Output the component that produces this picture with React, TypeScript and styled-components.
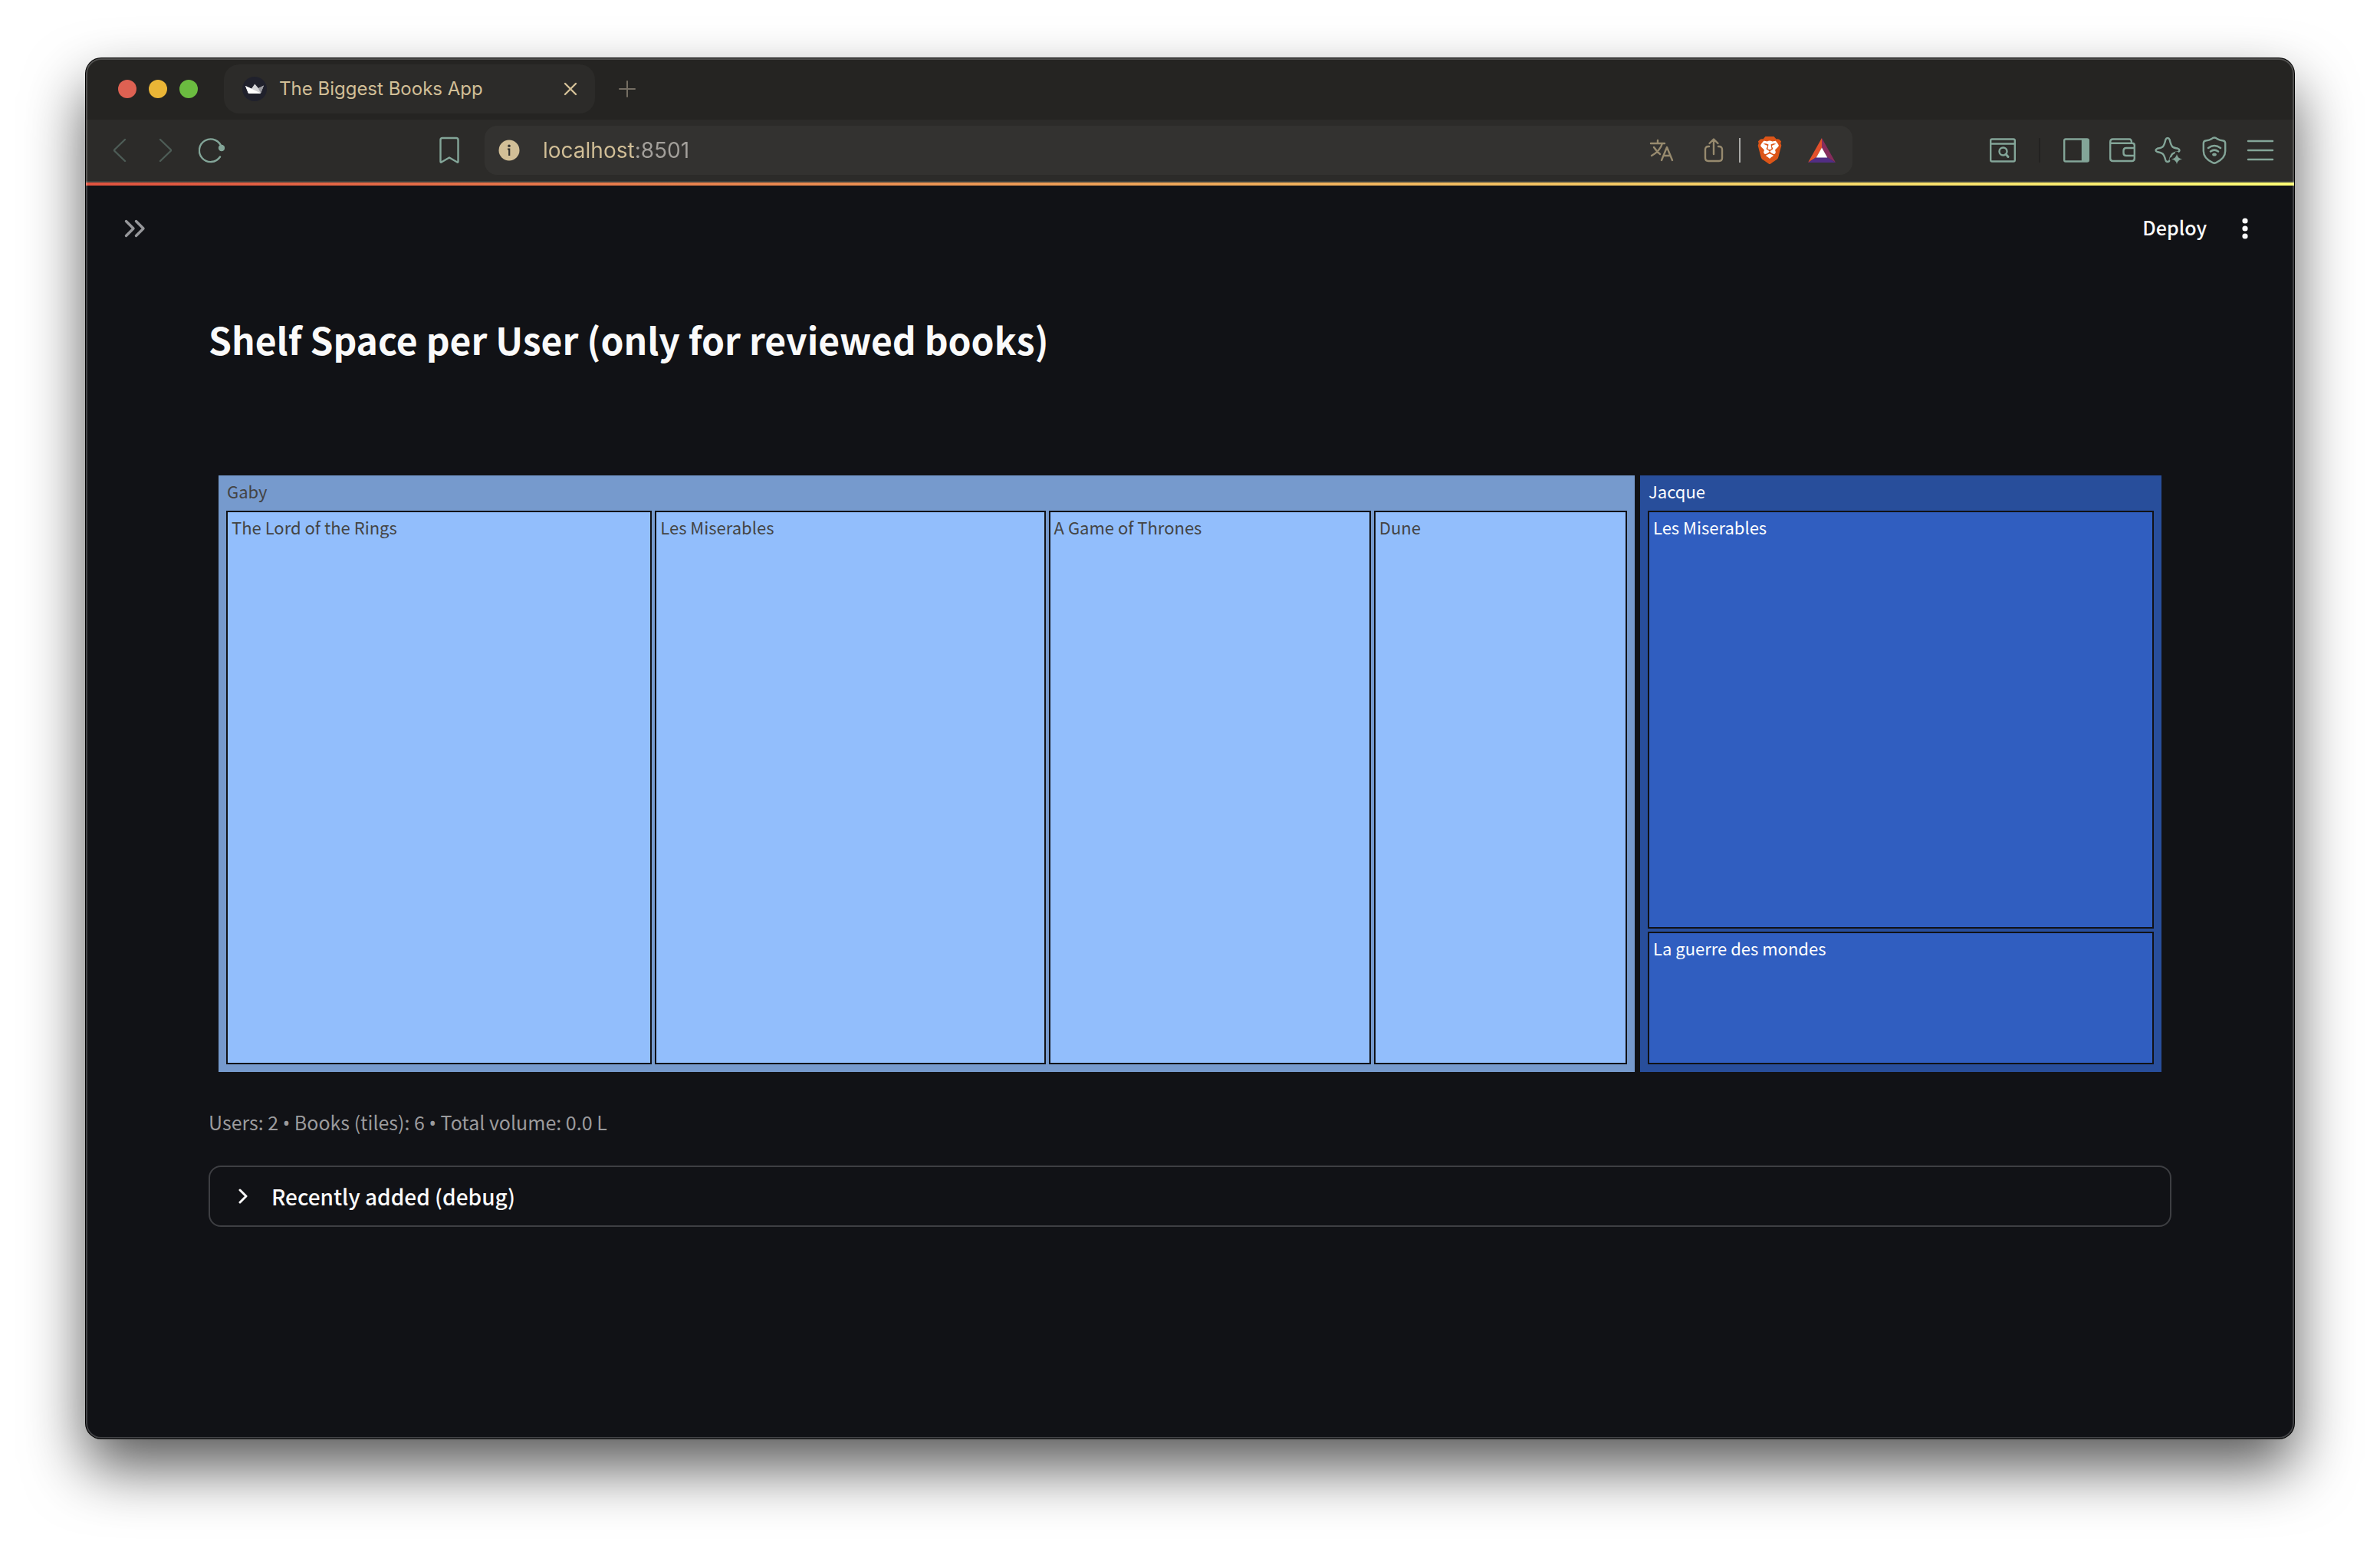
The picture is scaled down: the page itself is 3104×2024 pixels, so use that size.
import React from "react";
import styled, { createGlobalStyle } from "styled-components";
import { SiBrave } from "react-icons/si";

const uiFont = `Inter, Roboto, "Liberation Sans", sans-serif`;
const pageFont = `"Noto Sans CJK SC", "Noto Sans", sans-serif`;

const GlobalStyle = createGlobalStyle`
  *, *::before, *::after { box-sizing: border-box; }
  body { margin: 0; background: #ffffff; }
  button, input { font: inherit; }
`;

const Desktop = styled.div`
  display: flex;
  min-height: 100vh;
  padding: 76px 112px 148px;
  overflow: hidden;
`;

const Window = styled.div`
  position: relative;
  flex: 1;
  min-width: 0;
  display: flex;
  flex-direction: column;
  border-radius: 20px;
  overflow: hidden;
  background: #111216;
  box-shadow: 0 0 0 1px #000000, 0 38px 78px rgba(0, 0, 0, 0.65);

  &::after {
    content: "";
    position: absolute;
    inset: 0;
    border: 2px solid rgba(255, 255, 255, 0.2);
    border-radius: inherit;
    pointer-events: none;
  }
`;

const TabStrip = styled.div`
  display: flex;
  align-items: center;
  height: 80px;
  padding: 0 42px;
  background: #252422;
  font-family: ${uiFont};
`;

const Lights = styled.div`
  display: flex;
  gap: 16px;
  margin-right: 34px;
`;

const Light = styled.button<{ $color: string }>`
  width: 24px;
  height: 24px;
  padding: 0;
  border: 0;
  border-radius: 50%;
  background: ${(p) => p.$color};
`;

const Tab = styled.div`
  display: flex;
  align-items: center;
  width: 484px;
  height: 64px;
  padding: 0 20px 0 24px;
  border-radius: 20px;
  background: #2c2b29;
`;

const TabTitle = styled.span`
  flex: 1;
  margin-left: 16px;
  color: #d2bf97;
  font-size: 24px;
  line-height: 32px;
  white-space: nowrap;
`;

const IconButton = styled.button<{ $width?: number; $color?: string }>`
  display: flex;
  align-items: center;
  justify-content: center;
  flex: none;
  width: ${(p) => p.$width ?? 60}px;
  height: 40px;
  padding: 0;
  border: 0;
  background: none;
  color: ${(p) => p.$color ?? "#83a598"};

  svg {
    display: block;
    flex: none;
  }
`;

const NewTab = styled.div`
  margin-left: 12px;
`;

const Toolbar = styled.div`
  display: flex;
  align-items: center;
  height: 82px;
  padding: 0 14px;
  border-bottom: 2px solid #3e413e;
  background: #2c2b29;
  font-family: ${uiFont};
`;

const Group = styled.div`
  display: flex;
  align-items: center;
`;

const BookmarkSlot = styled.div`
  margin-left: 250px;
`;

const Address = styled.div`
  display: flex;
  align-items: center;
  flex: 1;
  min-width: 0;
  height: 64px;
  margin: 0 166px 0 16px;
  padding: 0 10px 0 2px;
  border-radius: 16px;
  background: #333230;
`;

const AddressInput = styled.input`
  flex: 1;
  min-width: 0;
  height: 48px;
  margin-left: 14px;
  padding: 0;
  border: 0;
  outline: 0;
  color: #d2bf97;
  background: linear-gradient(90deg, #d2bf97 120px, #a3a09b 120px);
  background-clip: text;
  -webkit-background-clip: text;
  -webkit-text-fill-color: transparent;
  font-size: 28px;
`;

const Rule = styled.span<{ $color: string; $gap?: number }>`
  width: 2px;
  height: 32px;
  margin: 0 ${(p) => p.$gap ?? 0}px;
  background: ${(p) => p.$color};
`;

const Rainbow = styled.div`
  height: 4px;
  background: linear-gradient(90deg, #e0533f, #fdfd75);
`;

const PageHeader = styled.header`
  display: flex;
  align-items: center;
  justify-content: space-between;
  height: 112px;
  padding: 0 34px;
  font-family: ${pageFont};
`;

const DeployButton = styled.button`
  padding: 0 20px 4px;
  border: 0;
  background: none;
  color: #fafafa;
  font-size: 25px;
  font-weight: 500;
  line-height: 36px;
`;

const Main = styled.main`
  display: flex;
  flex-direction: column;
  padding: 52px 160px 80px;
  font-family: ${pageFont};
  color: #fafafa;
`;

const Title = styled.h1`
  margin: 0 0 142px;
  font-size: 48px;
  font-weight: 700;
  line-height: 72px;
`;

const Treemap = styled.figure`
  display: grid;
  grid-template-columns: 1847fr 680fr;
  gap: 7px;
  height: 778px;
  margin: 0 13px;
`;

const Shelf = styled.section<{ $bg: string; $color: string }>`
  display: flex;
  flex-direction: column;
  min-width: 0;
  padding: 0 10px 10px;
  background: ${(p) => p.$bg};
  color: ${(p) => p.$color};
`;

const ShelfName = styled.h2`
  margin: 0;
  padding: 0 1px 6px;
  font-size: 22px;
  font-weight: 400;
  line-height: 40px;
`;

const Tiles = styled.div<{ $columns?: string; $rows?: string }>`
  flex: 1;
  display: grid;
  grid-template-columns: ${(p) => p.$columns ?? "1fr"};
  grid-template-rows: ${(p) => p.$rows ?? "1fr"};
  gap: 4px;
`;

const Tile = styled.div<{ $bg: string }>`
  min-width: 0;
  padding: 1px 5px;
  border: 2px solid #111216;
  background: ${(p) => p.$bg};
  font-size: 22px;
  line-height: 36px;
`;

const Caption = styled.p`
  margin: 44px 0 36px;
  color: #9b9b9d;
  font-size: 25px;
  line-height: 42px;
`;

const Bullet = styled.span`
  font-family: "Noto Sans", sans-serif;
  line-height: 1;
`;

const Expander = styled.details`
  border: 2px solid #3e3f43;
  border-radius: 16px;
`;

const Summary = styled.summary`
  display: flex;
  align-items: center;
  gap: 24px;
  height: 76px;
  padding: 0 28px;
  font-size: 28px;
  font-weight: 500;
  line-height: 40px;
  list-style: none;
  cursor: pointer;
`;

const line = {
  fill: "none",
  stroke: "currentColor",
  strokeWidth: 2.4,
  strokeLinecap: "round" as const,
  strokeLinejoin: "round" as const,
};

const Crown = () => (
  <svg width="32" height="32" viewBox="0 0 32 32">
    <circle cx="16" cy="16" r="16" fill="#20212c" />
    <path d="M4 12l8 3.500L16.300 9.500l4.700 5.500 7-3.500-3.800 9.500q-.4 1-1.500 1H9q-1 0-1.400-1z" fill="#d3d3d6" />
    <path d="M4 12l20 9.500-1.300.5H9q-1 0-1.400-1z" fill="#ffffff" />
    <path d="M28 11.500l-7 4 3.200 6z" fill="#98989e" />
  </svg>
);

const Cross = () => (
  <svg width="18" height="18" viewBox="0 0 18 18" {...line}>
    <path d="M2 2l14 14M16 2L2 16" />
  </svg>
);

const Plus = () => (
  <svg width="22" height="22" viewBox="0 0 22 22" {...line} strokeWidth={2}>
    <path d="M11 1v20M1 11h20" />
  </svg>
);

const Back = () => (
  <svg width="18" height="32" viewBox="0 0 18 32" {...line}>
    <path d="M16 2L2.500 15Q1.600 16 2.500 17L16 30" />
  </svg>
);

const Forward = () => (
  <svg width="18" height="32" viewBox="0 0 18 32" {...line}>
    <path d="M2 2l13.500 13q.9 1 0 2L2 30" />
  </svg>
);

const Reload = () => (
  <svg width="34" height="34" viewBox="0 0 34 34" {...line}>
    <path d="M30 13.500A14.800 14.800 0 1 0 28 25.500" />
    <circle cx="30" cy="14" r="4.200" fill="currentColor" stroke="none" />
  </svg>
);

const Bookmark = () => (
  <svg width="28" height="36" viewBox="0 0 28 36" {...line}>
    <path d="M2.500 4.500q0-2.500 2.500-2.500h18q2.500 0 2.500 2.500v28q0 2-1.600.8L14 27.500l-9.900 5.800q-1.600 1.200-1.600-.8z" />
  </svg>
);

const Info = () => (
  <svg width="28" height="28" viewBox="0 0 28 28">
    <circle cx="14" cy="14" r="13.500" fill="#d2bf97" />
    <circle cx="14" cy="8.300" r="1.800" fill="#333230" />
    <path d="M12 12.500h2.200v8.500" fill="none" stroke="#333230" strokeWidth="2.200" />
  </svg>
);

const Translate = () => (
  <svg width="32" height="30" viewBox="0 0 32 30" {...line}>
    <path d="M2 6h18M11 2v4M17 6Q14 16 3 22M6 11q4 6 8 9M16 28l7-17 7 17M18.500 22h9" />
  </svg>
);

const Share = () => (
  <svg width="26" height="34" viewBox="0 0 26 34" {...line}>
    <path d="M7 12H6q-4 0-4 4v11q0 4 4 4h14q4 0 4-4V16q0-4-4-4h-1M13 22V3M7.500 8L13 2.500 18.500 8" />
  </svg>
);

const Lion = () => (
  <svg width="36" height="36" viewBox="0 0 36 36">
    <path d="M9 5h18l4 7-4 14-9 5-9-5-4-14z" fill="#ffffff" />
    <SiBrave size={36} color="#dc5518" />
  </svg>
);

const Bat = () => (
  <svg width="36" height="32" viewBox="0 0 36 32">
    <path d="M18 0v13L11 25 0 32z" fill="#e2502c" />
    <path d="M18 0l18 32-11-7-7-12z" fill="#862c5c" />
    <path d="M0 32l11-7h14l11 7z" fill="#522d84" />
    <path d="M18 12.500L25.300 25.500H10.700z" fill="#ffffff" />
  </svg>
);

const WindowSearch = () => (
  <svg width="36" height="34" viewBox="0 0 36 34" {...line}>
    <path d="M4 2.500h28q1.800 0 1.800 1.800v25.400q0 1.800-1.800 1.800H4q-1.800 0-1.800-1.800V4.300Q2.200 2.500 4 2.500zM2.200 8.500h31.600" />
    <circle cx="18.500" cy="18.500" r="5" />
    <path d="M22 22l3 3.500" strokeWidth="3" />
  </svg>
);

const Sidebar = () => (
  <svg width="36" height="34" viewBox="0 0 36 34" {...line}>
    <path d="M4 2.500h28q1.800 0 1.800 1.800v25.400q0 1.800-1.800 1.800H4q-1.800 0-1.800-1.800V4.300Q2.200 2.500 4 2.500z" />
    <path d="M26 3.500h6.500v27H26z" fill="currentColor" />
  </svg>
);

const Wallet = () => (
  <svg width="36" height="34" viewBox="0 0 36 34" {...line}>
    <path d="M2.200 6q0-3.500 3.500-3.500H27q3 0 3 4.500M2.200 6q0 1.700 2 1.700H31q2.800 0 2.800 2.800v17q0 3.500-3.500 3.500H5.700q-3.500 0-3.500-3.500zM33.800 14H23q-3.500 0-3.500 3.500v3q0 3.500 3.500 3.500h10.800" />
  </svg>
);

const Sparkle = () => (
  <svg width="36" height="36" viewBox="0 0 36 36" {...line}>
    <path d="M14.400 4Q15.200 2 17 2T19.600 4Q21.300 11.500 23.500 13.500 25 14.800 30.500 15.800 32.500 16.500 32.500 18T30.500 20Q26 21 23.500 22.500 21.500 24 19.600 31 19 33 17 33T14.400 31Q12.500 24 10.500 22.500 8.500 21 3.500 20 1.500 19.300 1.500 18T3.500 15.800Q8.500 15 10.500 13.500 12.700 11.500 14.400 4z" />
    <path d="M29 22q1.200 6.500 7 7.500-5.800 1-7 6.500-1.200-5.500-7-6.500 5.800-1 7-7.500z" fill="currentColor" stroke="#2c2b29" strokeWidth="5" />
    <path d="M29 23q1 5.500 7 6.500-6 1-7 6.500-1-5.500-7-6.500 6-1 7-6.500z" fill="currentColor" stroke="none" />
  </svg>
);

const ShieldWifi = () => (
  <svg width="32" height="36" viewBox="0 0 32 36" {...line}>
    <path d="M16 1.500q2 0 3.500 1.500 3 2 8 2.500 2.700.5 2.700 3.500v10q0 9.500-12 15.200-2.200 1-4.400 0Q1.800 28.500 1.800 19V9q0-3 2.700-3.500 5-.5 8-2.500Q14 1.500 16 1.500z" />
    <path d="M8 15q8-6 16 0M11 19.500q5-3.600 10 0" strokeWidth="2.600" />
    <ellipse cx="16" cy="23.500" rx="2.800" ry="2" fill="currentColor" stroke="none" />
  </svg>
);

const Menu = () => (
  <svg width="36" height="28" viewBox="0 0 36 28" {...line}>
    <path d="M2 2h32M2 14h32M2 26h32" />
  </svg>
);

const DoubleChevron = () => (
  <svg width="28" height="24" viewBox="0 0 28 24" {...line} strokeWidth={3.4}>
    <path d="M2.500 2.500L12 12l-9.500 9.500M15.500 2.500L25 12l-9.500 9.500" />
  </svg>
);

const Kebab = () => (
  <svg width="8" height="28" viewBox="0 0 8 28" fill="currentColor">
    <circle cx="4" cy="4" r="3.600" />
    <circle cx="4" cy="14" r="3.600" />
    <circle cx="4" cy="24" r="3.600" />
  </svg>
);

const Chevron = () => (
  <svg width="28" height="20" viewBox="0 0 28 20" {...line} strokeWidth={3}>
    <path d="M11 2l8 8-8 8" />
  </svg>
);

const shelves = [
  {
    user: "Gaby",
    bg: "#769acd",
    tile: "#92befc",
    color: "#444444",
    columns: "555fr 509fr 420fr 330fr",
    books: ["The Lord of the Rings", "Les Miserables", "A Game of Thrones", "Dune"],
  },
  {
    user: "Jacque",
    bg: "#284e9b",
    tile: "#305ec0",
    color: "#ffffff",
    rows: "545fr 173fr",
    books: ["Les Miserables", "La guerre des mondes"],
  },
];

const lights = [
  { label: "Close", color: "#de6152" },
  { label: "Minimize", color: "#eab536" },
  { label: "Zoom", color: "#6bbc40" },
];

const tools = [
  { label: "Side panel", icon: <Sidebar /> },
  { label: "Wallet", icon: <Wallet /> },
  { label: "Assistant", icon: <Sparkle /> },
  { label: "VPN", icon: <ShieldWifi /> },
  { label: "Menu", icon: <Menu /> },
];

export default function App() {
  return (
    <Desktop>
      <GlobalStyle />
      <Window>
        <TabStrip>
          <Lights>
            {lights.map((l) => (
              <Light key={l.label} $color={l.color} aria-label={l.label} />
            ))}
          </Lights>
          <Tab>
            <Crown />
            <TabTitle>The Biggest Books App</TabTitle>
            <IconButton $width={24} $color="#d2bf97" aria-label="Close tab">
              <Cross />
            </IconButton>
          </Tab>
          <NewTab>
            <IconButton $color="#756e63" aria-label="New tab">
              <Plus />
            </IconButton>
          </NewTab>
        </TabStrip>

        <Toolbar>
          <Group>
            <IconButton $color="#4d5c56" aria-label="Back">
              <Back />
            </IconButton>
            <IconButton $color="#4d5c56" aria-label="Forward">
              <Forward />
            </IconButton>
            <IconButton aria-label="Reload">
              <Reload />
            </IconButton>
          </Group>
          <BookmarkSlot>
            <IconButton aria-label="Bookmark">
              <Bookmark />
            </IconButton>
          </BookmarkSlot>
          <Address>
            <IconButton aria-label="Site information">
              <Info />
            </IconButton>
            <AddressInput aria-label="Address" defaultValue="localhost:8501" />
            <IconButton $width={70} $color="#978a6e" aria-label="Translate">
              <Translate />
            </IconButton>
            <IconButton $width={66} $color="#978a6e" aria-label="Share">
              <Share />
            </IconButton>
            <Rule $color="#a9a9a7" />
            <IconButton $width={76} aria-label="Shields">
              <Lion />
            </IconButton>
            <IconButton $width={60} aria-label="Rewards">
              <Bat />
            </IconButton>
          </Address>
          <Group>
            <IconButton aria-label="Search tabs">
              <WindowSearch />
            </IconButton>
            <Rule $color="#232221" $gap={17} />
            {tools.map((t) => (
              <IconButton key={t.label} aria-label={t.label}>
                {t.icon}
              </IconButton>
            ))}
          </Group>
        </Toolbar>

        <Rainbow />

        <PageHeader>
          <IconButton $color="#96979a" aria-label="Open sidebar">
            <DoubleChevron />
          </IconButton>
          <Group>
            <DeployButton>Deploy</DeployButton>
            <IconButton $color="#fafafa" aria-label="More options">
              <Kebab />
            </IconButton>
          </Group>
        </PageHeader>

        <Main>
          <Title>Shelf Space per User (only for reviewed books)</Title>
          <Treemap>
            {shelves.map((s) => (
              <Shelf key={s.user} $bg={s.bg} $color={s.color}>
                <ShelfName>{s.user}</ShelfName>
                <Tiles $columns={s.columns} $rows={s.rows}>
                  {s.books.map((b) => (
                    <Tile key={b} $bg={s.tile}>
                      {b}
                    </Tile>
                  ))}
                </Tiles>
              </Shelf>
            ))}
          </Treemap>
          <Caption>
            Users: 2 <Bullet>•</Bullet> Books (tiles): 6 <Bullet>•</Bullet> Total volume: 0.0 L
          </Caption>
          <Expander>
            <Summary>
              <Chevron />
              Recently added (debug)
            </Summary>
          </Expander>
        </Main>
      </Window>
    </Desktop>
  );
}
